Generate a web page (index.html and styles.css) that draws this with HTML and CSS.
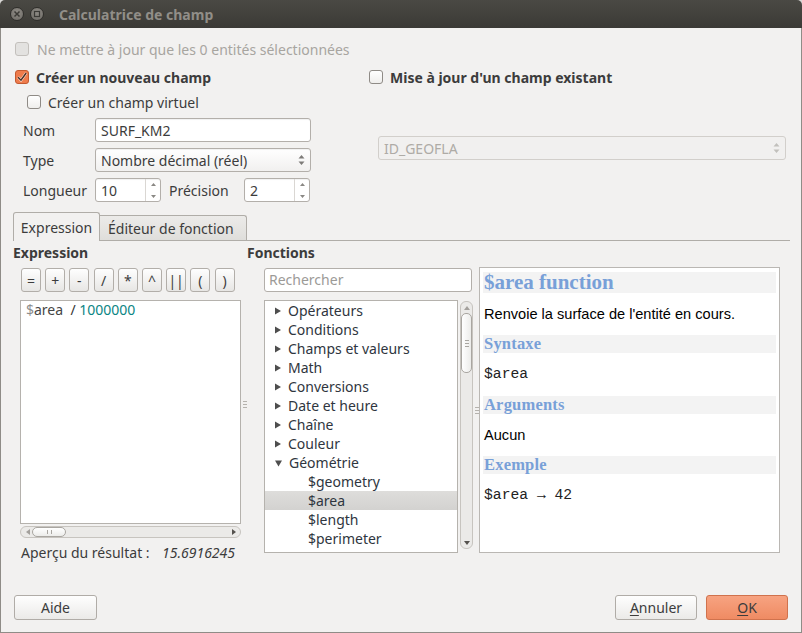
FILE: index.html
```html
<!DOCTYPE html>
<html lang="fr">
<head>
<meta charset="utf-8">
<title>Calculatrice de champ</title>
<link rel="stylesheet" href="styles.css">
</head>
<body>
<div class="window">
  <div class="titlebar">
    <span class="wbtn"><svg width="14" height="14" viewBox="0 0 14 14"><path d="M4.5 4.5 L9.5 9.5 M9.5 4.5 L4.5 9.5" stroke="#3b3a36" stroke-width="1.5"/></svg></span>
    <span class="wbtn"><svg width="14" height="14" viewBox="0 0 14 14"><rect x="4.5" y="4.5" width="5" height="5" fill="none" stroke="#3b3a36" stroke-width="1.2"/></svg></span>
    <span class="title">Calculatrice de champ</span>
  </div>
  <div class="content">
    <div class="row r-sel"><span class="cb cb-dis"></span>Ne mettre à jour que les 0 entités sélectionnées</div>
    <div class="top">
      <div class="left">
        <div class="row r-new"><span class="cb cb-on"><svg width="14" height="14" viewBox="0 0 14 14"><rect x="0.5" y="0.5" width="13" height="13" rx="2.5" fill="#ef7c4c" stroke="#c35a30"/><path d="M3 7.2 L6 10.2 L11.2 3" fill="none" stroke="#fbe3d8" stroke-width="2.6"/><path d="M3 7.2 L6 10.2 L11.2 3" fill="none" stroke="#4b2f24" stroke-width="1.5"/></svg></span><b>Créer un nouveau champ</b></div>
        <div class="row r-virt"><span class="cb"></span>Créer un champ virtuel</div>
        <div class="form">
          <div class="frow"><span class="flabel">Nom</span><div class="field w216">SURF_KM2</div></div>
          <div class="frow"><span class="flabel">Type</span><div class="field combo w216"><span class="ftext">Nombre décimal (réel)</span><svg class="updown" width="7" height="14" viewBox="0 0 7 14"><path d="M0.5 5.5 L3.5 2 L6.5 5.5Z M0.5 8.5 L3.5 12 L6.5 8.5Z" fill="#7d7b78"/></svg></div></div>
          <div class="frow"><span class="flabel">Longueur</span><div class="field spin"><span class="ftext">10</span><span class="spinbtn"><svg width="5" height="20" viewBox="0 0 5 20"><path d="M0 6 L2.5 3 L5 6Z M0 15 L2.5 18 L5 15Z" fill="#8a8884"/></svg></span></div><span class="flabel prec">Précision</span><div class="field spin"><span class="ftext">2</span><span class="spinbtn"><svg width="5" height="20" viewBox="0 0 5 20"><path d="M0 6 L2.5 3 L5 6Z M0 15 L2.5 18 L5 15Z" fill="#8a8884"/></svg></span></div></div>
        </div>
      </div>
      <div class="right">
        <div class="row r-upd"><span class="cb"></span><b>Mise à jour d'un champ existant</b></div>
        <div class="field combo dis"><span class="ftext">ID_GEOFLA</span><svg class="updown" width="7" height="14" viewBox="0 0 7 14"><path d="M0.5 5.5 L3.5 2 L6.5 5.5Z M0.5 8.5 L3.5 12 L6.5 8.5Z" fill="#c2c0bc"/></svg></div>
      </div>
    </div>
    <div class="tabs">
      <div class="tab active">Expression</div>
      <div class="tab">Éditeur de fonction</div>
    </div>
    <div class="pane">
      <div class="col-left">
        <div class="plabel">Expression</div>
        <div class="ops">
          <span class="op">=</span><span class="op">+</span><span class="op">-</span><span class="op">/</span><span class="op">*</span><span class="op">^</span><span class="op">||</span><span class="op">(</span><span class="op">)</span>
        </div>
        <div class="editor"><span class="e-dollar">$</span><span class="e-var">area</span>  <span class="e-op">/</span> <span class="e-num">1000000</span></div>
        <div class="hscroll">
          <svg class="harrow" width="4" height="6" viewBox="0 0 4 6"><path d="M4 0 L0 3 L4 6Z" fill="#a3a09c"/></svg>
          <span class="hthumb"><span class="hgrip"></span></span>
          <span class="hfill"></span>
          <svg class="harrow" width="4" height="6" viewBox="0 0 4 6"><path d="M0 0 L4 3 L0 6Z" fill="#55524e"/></svg>
        </div>
        <div class="preview"><span class="pv-label">Aperçu du résultat :</span><i>15.6916245</i></div>
      </div>
      <div class="splitter s1"><span class="grip"></span></div>
      <div class="col-mid">
        <div class="plabel">Fonctions</div>
        <div class="search">Rechercher</div>
        <div class="treewrap">
          <div class="tree">
            <div class="titem"><svg class="tarrow" width="6" height="8" viewBox="0 0 6 8"><path d="M0 0.5 L6 4 L0 7.5Z" fill="#4e4e4e"/></svg>Opérateurs</div>
            <div class="titem"><svg class="tarrow" width="6" height="8" viewBox="0 0 6 8"><path d="M0 0.5 L6 4 L0 7.5Z" fill="#4e4e4e"/></svg>Conditions</div>
            <div class="titem"><svg class="tarrow" width="6" height="8" viewBox="0 0 6 8"><path d="M0 0.5 L6 4 L0 7.5Z" fill="#4e4e4e"/></svg>Champs et valeurs</div>
            <div class="titem"><svg class="tarrow" width="6" height="8" viewBox="0 0 6 8"><path d="M0 0.5 L6 4 L0 7.5Z" fill="#4e4e4e"/></svg>Math</div>
            <div class="titem"><svg class="tarrow" width="6" height="8" viewBox="0 0 6 8"><path d="M0 0.5 L6 4 L0 7.5Z" fill="#4e4e4e"/></svg>Conversions</div>
            <div class="titem"><svg class="tarrow" width="6" height="8" viewBox="0 0 6 8"><path d="M0 0.5 L6 4 L0 7.5Z" fill="#4e4e4e"/></svg>Date et heure</div>
            <div class="titem"><svg class="tarrow" width="6" height="8" viewBox="0 0 6 8"><path d="M0 0.5 L6 4 L0 7.5Z" fill="#4e4e4e"/></svg>Chaîne</div>
            <div class="titem"><svg class="tarrow" width="6" height="8" viewBox="0 0 6 8"><path d="M0 0.5 L6 4 L0 7.5Z" fill="#4e4e4e"/></svg>Couleur</div>
            <div class="titem"><svg class="tarrow" width="7" height="8" viewBox="0 0 7 8"><path d="M0 1.5 L7 1.5 L3.5 7.5Z" fill="#4e4e4e"/></svg>Géométrie</div>
            <div class="titem child">$geometry</div>
            <div class="titem child sel">$area</div>
            <div class="titem child">$length</div>
            <div class="titem child">$perimeter</div>
          </div>
          <div class="vscroll">
            <svg class="varrow" width="6" height="4" viewBox="0 0 6 4"><path d="M0 4 L3 0 L6 4Z" fill="#a3a09c"/></svg>
            <span class="vthumb"><span class="vgrip"></span></span>
            <span class="vfill"></span>
            <svg class="varrow" width="6" height="4" viewBox="0 0 6 4"><path d="M0 0 L3 4 L6 0Z" fill="#55524e"/></svg>
          </div>
        </div>
      </div>
      <div class="splitter s2"><span class="grip"></span></div>
      <div class="help">
        <div class="hband h1">$area function</div>
        <div class="hp">Renvoie la surface de l'entité en cours.</div>
        <div class="hband h3">Syntaxe</div>
        <div class="hp mono tall">$area</div>
        <div class="hband h3">Arguments</div>
        <div class="hp">Aucun</div>
        <div class="hband h3">Exemple</div>
        <div class="hp mono">$area → 42</div>
      </div>
    </div>
    <div class="buttons">
      <span class="btn aide">Aide</span>
      <span class="spacer"></span>
      <span class="btn"><u>A</u>nnuler</span>
      <span class="btn ok"><u>O</u>K</span>
    </div>
  </div>
</div>
</body>
</html>
```

FILE: styles.css
```css
* { box-sizing: border-box; }
html, body { margin: 0; padding: 0; }
body {
  width: 802px; height: 633px; overflow: hidden;
  background: #d9d8d6;
  font-family: "Noto Sans", "DejaVu Sans", sans-serif;
  font-size: 14px;
  color: #3c3c3c;
}
.window { width: 802px; height: 633px; display: flex; flex-direction: column; }

.titlebar {
  height: 28px; flex: none;
  display: flex; align-items: center;
  padding-left: 10px;
  background: linear-gradient(#4a4944, #3b3a36);
  border-radius: 5px 5px 0 0;
}
.wbtn {
  width: 14px; height: 14px; border-radius: 50%;
  background: radial-gradient(circle at 50% 35%, #8e8b85, #6d6a65);
  border: 1px solid #2f2e2b;
  display: flex; align-items: center; justify-content: center;
  margin-right: 6px;
}
.wbtn svg { display: block; margin: -1px; }
.title { margin-left: 9px; font-weight: bold; font-size: 14px; color: #918e88; }

.content {
  flex: 1; display: flex; flex-direction: column;
  background: #f2f1f0;
  border: 1px solid #8f8c87; border-top: none;
  padding: 10px 11px 12px 12px;
}

.row { height: 22px; display: flex; align-items: center; white-space: nowrap; }
.cb {
  width: 14px; height: 14px; flex: none;
  border: 1px solid #8f8b86; border-radius: 3px;
  background: linear-gradient(#ffffff, #efeeec);
  margin-right: 7px;
}
.cb-dis { background: #e3e2e0; border-color: #c3c0bc; margin-right: 8px; }
.cb-on { border: none; background: none; }
.cb-on svg { display: block; }
.r-sel { margin-left: 2px; color: #a8a5a0; }
.r-new { margin-left: 2px; }
.r-virt { margin-left: 14px; margin-top: 3px; }

.top { display: flex; margin-top: 6px; }
.left { width: 356px; flex: none; }
.right { flex: 1; }

.form { margin-left: 10px; margin-top: 5px; }
.frow { display: flex; align-items: center; height: 24px; margin-top: 6px; }
.frow:first-child { margin-top: 0; }
.flabel { width: 72px; flex: none; }
.flabel.prec { width: 75px; margin-left: 8px; }

.field {
  height: 24px; border: 1px solid #b3afaa; border-radius: 3px;
  background: #fff; display: flex; align-items: center;
  padding-left: 5px;
  box-shadow: inset 0 1px 1px rgba(0,0,0,0.06);
}
.w216 { width: 216px; }
.combo { background: linear-gradient(#ffffff, #f1f0ef); }
.ftext { flex: 1; }
.updown { margin-right: 5px; flex: none; }
.spin { width: 66px; padding-left: 5px; }
.spinbtn {
  width: 15px; height: 22px; border-left: 1px solid #dad7d3;
  display: flex; align-items: center; justify-content: center;
}
.spinbtn svg { display: block; }
.right .dis {
  margin-left: 9px; margin-top: 48px; width: 408px;
  color: #aeaba6; border-color: #d2cfcb;
  background: #f1f0ef; box-shadow: none;
}

.tabs {
  display: flex; align-items: flex-end;
  height: 29px; margin-top: 10px;
  border-bottom: 1px solid #b0ada8;
  flex: none;
}
.tab {
  height: 25px; width: 147px;
  border: 1px solid #b0ada8; border-bottom: none; border-left: none;
  border-radius: 0 3px 0 0;
  background: linear-gradient(#ecebe9, #dfdedb);
  padding-left: 8px;
  display: flex; align-items: center;
}
.tab.active {
  height: 29px; width: 87px; margin-bottom: -1px;
  border-left: 1px solid #b0ada8; border-radius: 3px 3px 0 0;
  background: #f2f1f0; padding-left: 0; justify-content: center;
  position: relative;
}

.pane { display: flex; align-items: flex-start; padding-top: 4px; }
.plabel { font-weight: bold; height: 16px; line-height: 16px; }
.col-left { width: 229px; flex: none; }
.ops { display: flex; gap: 4.2px; margin: 7px 0 0 8px; }
.op {
  width: 20px; height: 24px; flex: none;
  border: 1px solid #b2aea9; border-radius: 3px;
  background: linear-gradient(#fefefe, #e7e6e4);
  display: flex; align-items: center; justify-content: center;
  font-size: 14px; color: #3c3c3c;
}
.editor {
  margin: 8px 0 0 7px; width: 221px; height: 224px;
  border: 1px solid #b5b2ad; background: #fff;
  padding: 0 5px; line-height: 18px; white-space: pre;
}
.e-dollar { color: #8d8d8d; }
.e-var { color: #454545; }
.e-op { color: #333; }
.e-num { color: #0b8584; }
.hscroll {
  margin: 2px 0 0 7px; width: 221px; height: 12px;
  border: 1px solid #c7c4bf; border-radius: 6px;
  background: #ebeae8;
  display: flex; align-items: center; padding: 0 4px 0 5px;
}
.harrow { flex: none; display: block; }
.hthumb {
  width: 34px; height: 10px; margin-left: 2px;
  border: 1px solid #a9a6a1; border-radius: 5px;
  background: linear-gradient(#ffffff, #ececea);
  display: flex; align-items: center; justify-content: center;
}
.hgrip { width: 5px; height: 4px; border-left: 1px solid #a9a6a1; border-right: 1px solid #a9a6a1; }
.hfill { flex: 1; }
.preview { margin: 7px 0 0 8px; height: 16px; line-height: 16px; white-space: nowrap; }
.pv-label { display: inline-block; width: 141px; }

.splitter { width: 5px; flex: none; display: flex; justify-content: center; }
.s1 { padding-top: 156px; }
.s2 { padding-top: 162px; }
.grip { width: 4px; height: 7px; border-top: 1px solid #b5b2ad; border-bottom: 1px solid #b5b2ad; background: linear-gradient(transparent 2px, #b5b2ad 2px, #b5b2ad 3px, transparent 3px); }

.col-mid { width: 227px; flex: none; }
.search {
  margin: 7px 0 0 17px; width: 208px; height: 24px;
  border: 1px solid #b3afaa; border-radius: 3px; background: #fff;
  padding-left: 4px; line-height: 22px; color: #9c9a97;
}
.treewrap { display: flex; margin: 8px 0 0 17px; height: 253px; }
.tree { width: 194px; height: 253px; border: 1px solid #b5b2ad; background: #fff; flex: none; }
.titem { height: 19px; display: flex; align-items: center; padding-left: 10px; color: #2f3640; white-space: nowrap; }
.tarrow { flex: none; margin-right: 7px; display: block; }
.titem.child { padding-left: 43px; }
.titem.sel { background: linear-gradient(#dedddb, #d3d2d0); }
.vscroll {
  width: 13px; height: 248px; margin: 1px 0 0 2px;
  border: 1px solid #c7c4bf; border-radius: 6px;
  background: #ebeae8;
  display: flex; flex-direction: column; align-items: center;
  padding: 4px 0 3px;
}
.varrow { display: block; flex: none; }
.vthumb {
  width: 11px; height: 60px; margin-top: 3px;
  border: 1px solid #a9a6a1; border-radius: 5px;
  background: linear-gradient(90deg, #ffffff, #ececea);
  display: flex; align-items: center; justify-content: center;
}
.vgrip { width: 4px; height: 7px; border-top: 1px solid #a9a6a1; border-bottom: 1px solid #a9a6a1; background: linear-gradient(transparent 2px, #a9a6a1 2px, #a9a6a1 3px, transparent 3px); }
.vfill { flex: 1; }

.help {
  width: 301px; height: 286px; margin-top: 22px; flex: none;
  border: 1px solid #bab7b3; background: #fff;
  padding: 4px 3px;
}
.hband {
  background: #f3f3f3; color: #78a0d8;
  font-family: "Liberation Serif", "Times New Roman", serif; font-weight: bold;
  padding-left: 1px; white-space: nowrap;
}
.hband.h1 { height: 21px; line-height: 21px; font-size: 21px; }
.hband.h3 { height: 18px; line-height: 18px; font-size: 16.5px; letter-spacing: 0.2px; }
.hp {
  height: 42px; line-height: 42px; padding-left: 1px;
  font-family: "Liberation Sans", Arial, sans-serif; font-size: 14.6px; color: #000;
  white-space: nowrap;
}
.hp.tall { height: 43px; line-height: 43px; }
.hp.mono { font-family: "Liberation Mono", "Courier New", monospace; font-size: 14.7px; color: #222; }

.buttons { display: flex; margin-top: auto; height: 25px; padding-right: 2px; }
.btn {
  width: 82px; height: 25px;
  border: 1px solid #b0aca7; border-radius: 3px;
  background: linear-gradient(#fefefe, #ebeae8);
  display: flex; align-items: center; justify-content: center;
  margin-left: 9px;
}
.btn u { text-decoration-thickness: 1px; text-underline-offset: 2px; }
.btn.aide { width: 83px; margin-left: 1px; }
.btn.ok { background: linear-gradient(#f7a381, #ef8b63); border-color: #d0724d; }
.spacer { flex: 1; }
```
